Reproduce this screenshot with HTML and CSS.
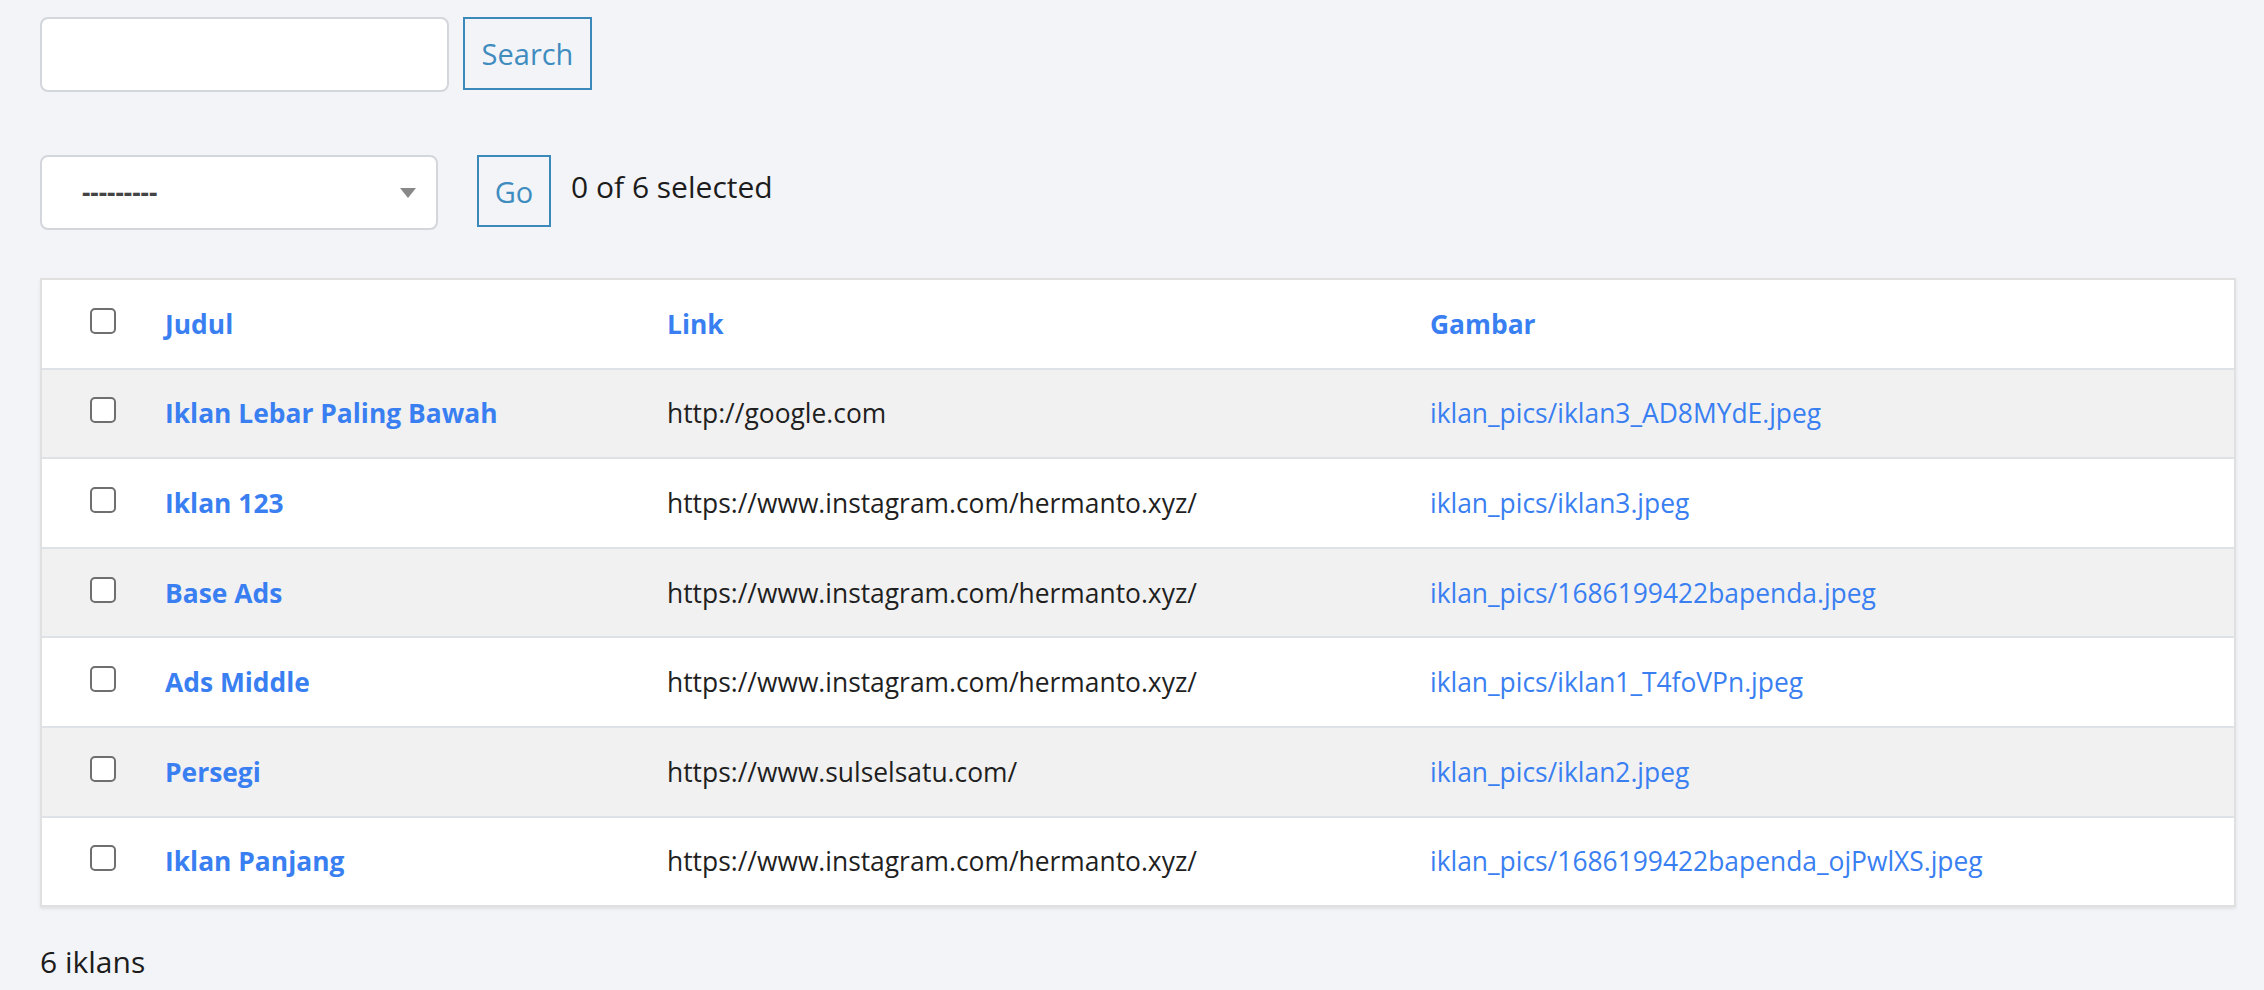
FILE: index.html
```html
<!DOCTYPE html>
<html lang="id">
<head>
<meta charset="utf-8">
<title>Iklan</title>
<link rel="stylesheet" href="styles.css">
</head>
<body>
<div class="page">
  <form class="search-row">
    <input class="search-input" type="text">
    <button class="btn btn-search" type="button">Search</button>
  </form>

  <div class="actions-row">
    <div class="select-box">
      <span class="select-text">---------</span>
      <span class="select-arrow"></span>
    </div>
    <button class="btn btn-go" type="button">Go</button>
    <span class="selected-count">0 of 6 selected</span>
  </div>

  <div class="card">
    <table class="result-table">
      <colgroup>
        <col class="col-check">
        <col class="col-judul">
        <col class="col-link">
        <col class="col-gambar">
      </colgroup>
      <thead>
        <tr>
          <th class="cell-check"><span class="checkbox"></span></th>
          <th><a class="head-link">Judul</a></th>
          <th><a class="head-link">Link</a></th>
          <th><a class="head-link">Gambar</a></th>
        </tr>
      </thead>
      <tbody>
        <tr class="row-odd">
          <td class="cell-check"><span class="checkbox"></span></td>
          <td><a class="title-link">Iklan Lebar Paling Bawah</a></td>
          <td class="cell-text">http://google.com</td>
          <td><a class="file-link">iklan_pics/iklan3_AD8MYdE.jpeg</a></td>
        </tr>
        <tr>
          <td class="cell-check"><span class="checkbox"></span></td>
          <td><a class="title-link">Iklan 123</a></td>
          <td class="cell-text">https://www.instagram.com/hermanto.xyz/</td>
          <td><a class="file-link">iklan_pics/iklan3.jpeg</a></td>
        </tr>
        <tr class="row-odd">
          <td class="cell-check"><span class="checkbox"></span></td>
          <td><a class="title-link">Base Ads</a></td>
          <td class="cell-text">https://www.instagram.com/hermanto.xyz/</td>
          <td><a class="file-link">iklan_pics/1686199422bapenda.jpeg</a></td>
        </tr>
        <tr>
          <td class="cell-check"><span class="checkbox"></span></td>
          <td><a class="title-link">Ads Middle</a></td>
          <td class="cell-text">https://www.instagram.com/hermanto.xyz/</td>
          <td><a class="file-link">iklan_pics/iklan1_T4foVPn.jpeg</a></td>
        </tr>
        <tr class="row-odd">
          <td class="cell-check"><span class="checkbox"></span></td>
          <td><a class="title-link">Persegi</a></td>
          <td class="cell-text">https://www.sulselsatu.com/</td>
          <td><a class="file-link">iklan_pics/iklan2.jpeg</a></td>
        </tr>
        <tr class="row-last">
          <td class="cell-check"><span class="checkbox"></span></td>
          <td><a class="title-link">Iklan Panjang</a></td>
          <td class="cell-text">https://www.instagram.com/hermanto.xyz/</td>
          <td><a class="file-link">iklan_pics/1686199422bapenda_ojPwlXS.jpeg</a></td>
        </tr>
      </tbody>
    </table>
  </div>

  <p class="paginator">6 iklans</p>
</div>
</body>
</html>
```

FILE: styles.css
```css
html, body {
  margin: 0;
  padding: 0;
  background: #f3f4f8;
}

body {
  font-family: "Open Sans", "Noto Sans", sans-serif;
  font-size: 26px;
  color: #212121;
}

.page {
  padding: 17px 30px 0 40px;
}

.search-row {
  display: flex;
  align-items: flex-start;
  gap: 14px;
  margin: 0;
}

.search-input {
  box-sizing: border-box;
  width: 409px;
  height: 75px;
  border: 2px solid #d3d6db;
  border-radius: 8px;
  background: #fff;
  margin: 0;
  padding: 0 16px;
  font: inherit;
}

.btn {
  box-sizing: border-box;
  background: transparent;
  border: 2px solid #3b88bb;
  color: #3f8cbf;
  font-family: "Open Sans", "Noto Sans", sans-serif;
  font-size: 29px;
  font-weight: 400;
  padding: 0;
  margin: 0;
  border-radius: 0;
}

.btn-search {
  width: 129px;
  height: 73px;
}

.actions-row {
  display: flex;
  align-items: flex-start;
  margin-top: 63px;
}

.select-box {
  box-sizing: border-box;
  width: 398px;
  height: 75px;
  border: 2px solid #d3d6db;
  border-radius: 8px;
  background: #fff;
  display: flex;
  align-items: center;
  justify-content: space-between;
  padding: 0 20px 0 40px;
}

.select-text {
  font-size: 26px;
  font-weight: 700;
  color: #444;
  position: relative;
  top: -1px;
}

.select-arrow {
  width: 0;
  height: 0;
  border-left: 8px solid transparent;
  border-right: 8px solid transparent;
  border-top: 10px solid #888;
}

.btn-go {
  width: 74px;
  height: 72px;
  margin-left: 39px;
}

.selected-count {
  margin-left: 20px;
  font-size: 30px;
  line-height: 64px;
  color: #1c1c1c;
}

.card {
  margin-top: 48px;
  width: 2192px;
  background: #fff;
  border: 2px solid #e0e0e0;
  box-shadow: 0 2px 3px rgba(0, 0, 0, 0.08);
}

.result-table {
  width: 100%;
  border-collapse: collapse;
  table-layout: fixed;
  font-size: 26.4px;
}

.col-check { width: 123px; }
.col-judul { width: 502px; }
.col-link { width: 763px; }

.result-table th,
.result-table td {
  height: 87.6px;
  padding: 0;
  text-align: left;
  vertical-align: middle;
  border-bottom: 2px solid #dee2e6;
  white-space: nowrap;
}

.result-table tr.row-last td {
  border-bottom: none;
}

.row-odd td {
  background: #f1f1f1;
}

.cell-check {
  padding-left: 48px !important;
}

.checkbox {
  display: block;
  box-sizing: border-box;
  width: 26px;
  height: 26px;
  border: 2px solid #6f6f6f;
  border-radius: 5px;
  background: #fff;
  position: relative;
  top: -3px;
}

.head-link,
.title-link {
  color: #3a7ff1;
  font-weight: 700;
  text-decoration: none;
}

.file-link {
  color: #3a7ff1;
  text-decoration: none;
}

.cell-text {
  color: #1f1f1f;
}

.paginator {
  margin: 34px 0 0 0;
  font-size: 30px;
  color: #1c1c1c;
}
```
